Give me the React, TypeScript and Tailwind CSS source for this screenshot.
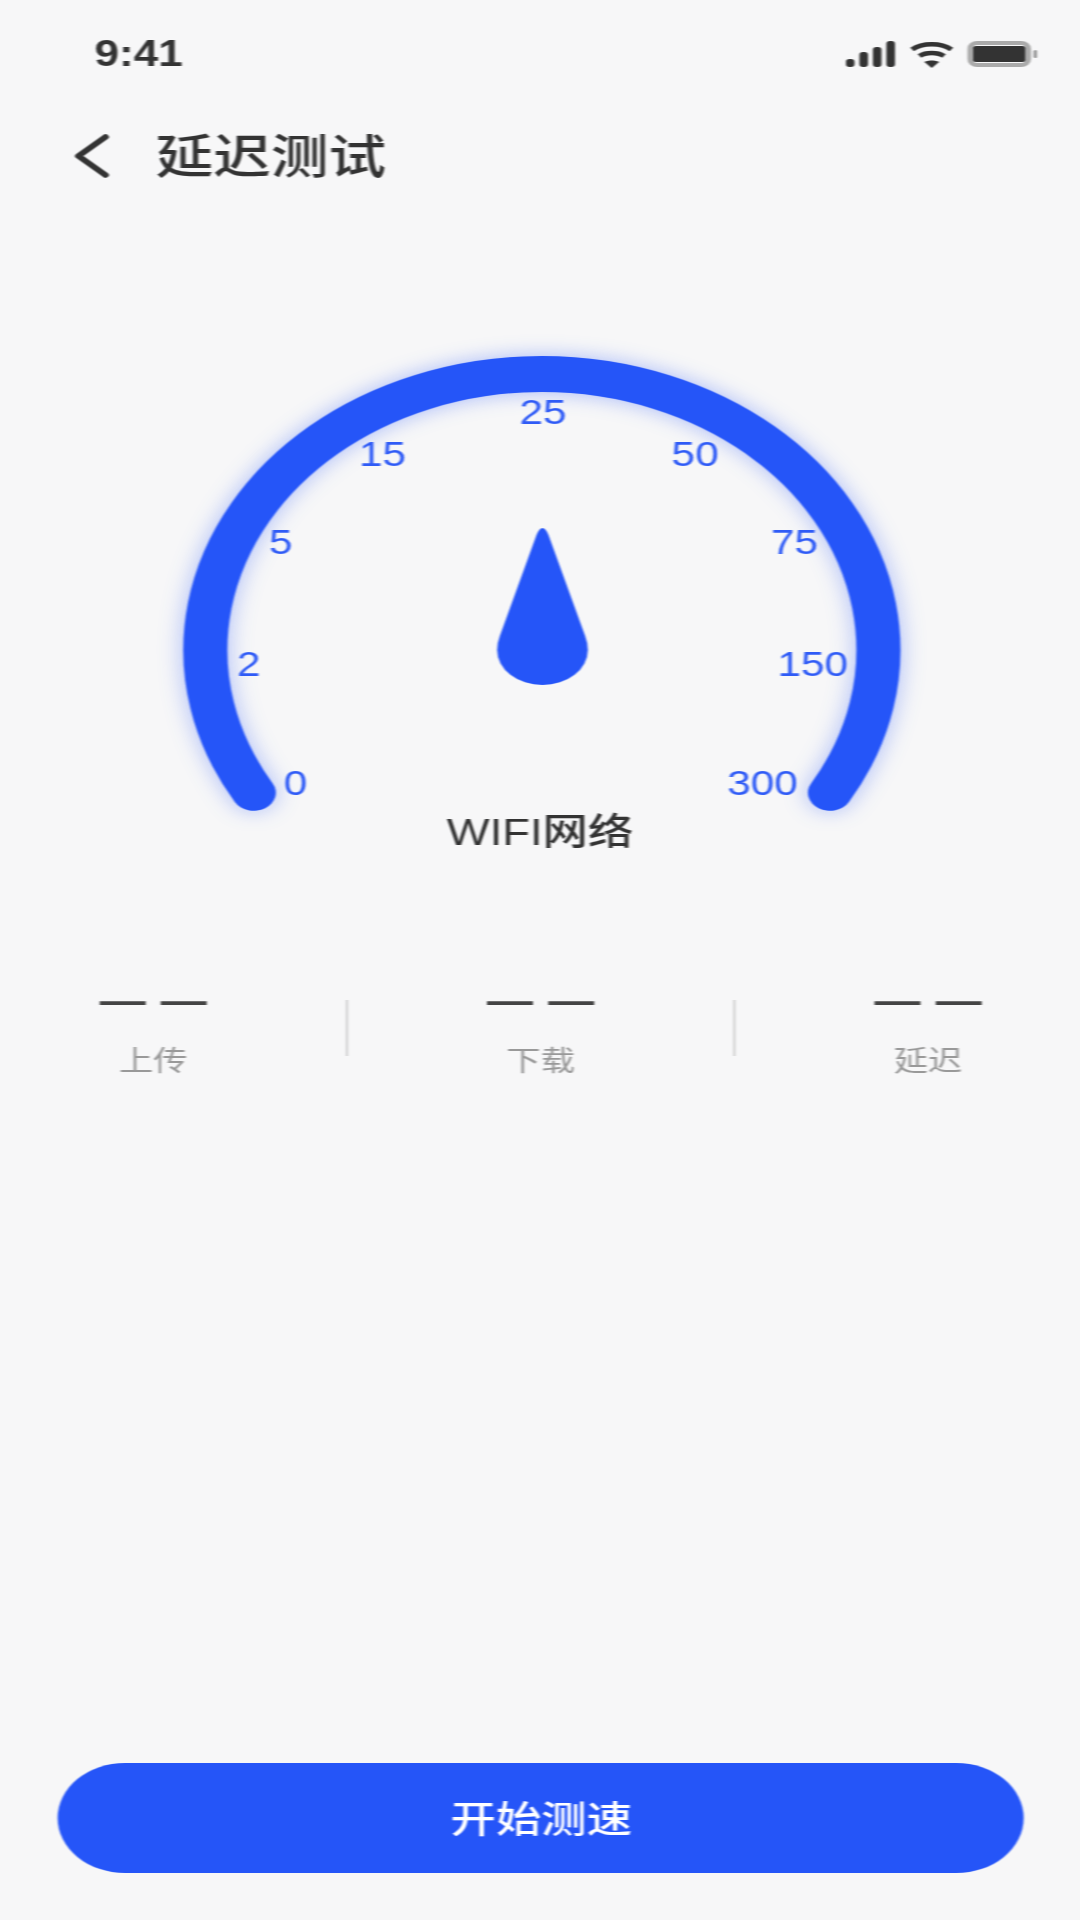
const gaugeLabels = [
  { text: '0', className: 'left-[241px] top-[443px]' },
  { text: '2', className: 'left-[203px] top-[324px]' },
  { text: '5', className: 'left-[229px] top-[202px]' },
  { text: '15', className: 'left-[312px] top-[114px]' },
  { text: '25', className: 'left-[443px] top-[72px]' },
  { text: '50', className: 'left-[567px] top-[114px]' },
  { text: '75', className: 'left-[648px] top-[202px]' },
  { text: '150', className: 'left-[663px] top-[324px]' },
  { text: '300', className: 'left-[622px] top-[443px]' },
];

const stats = ['上传', '下载', '延迟'];

function StatusIcons() {
  return (
    <div className="flex items-center gap-[11px]">
      <svg width="41" height="26" viewBox="0 0 41 26" fill="#333333">
        <rect x="0" y="18" width="7" height="8" rx="3" />
        <rect x="11" y="11" width="7" height="15" rx="3" />
        <rect x="22" y="6" width="7" height="20" rx="3" />
        <rect x="33" y="0" width="7" height="26" rx="3" />
      </svg>
      <svg width="36" height="27" viewBox="0 0 36 27" fill="none" stroke="#333333" strokeWidth="4.5">
        <path d="M2 8.5 C 10 1.5, 26 1.5, 34 8.5" />
        <path d="M8 15 C 13 11, 23 11, 28 15" />
        <path d="M18 27 L 12 21 C 15 19, 21 19, 24 21 Z" fill="#333333" stroke="none" />
      </svg>
      <svg width="57" height="26" viewBox="0 0 57 26">
        <rect x="2" y="2" width="48" height="22" rx="6" fill="#f7f7f8" stroke="#aaaaaa" strokeWidth="4" />
        <rect x="4.5" y="5" width="43" height="16" rx="2.5" fill="#333333" />
        <rect x="54" y="9" width="3" height="8" rx="1.5" fill="#999999" />
      </svg>
    </div>
  );
}

function Gauge() {
  return (
    <section className="mt-[136px] relative">
      <svg
        viewBox="0 0 881 470"
        className="block h-[470px] w-[881px] overflow-visible drop-shadow-[0_0_10px_rgba(37,84,250,0.38)]"
      >
        <path
          d="M 207 452.7 A 274.5 276 0 1 1 677 452.7"
          fill="none"
          stroke="#2555f8"
          strokeWidth="36"
          strokeLinecap="round"
        />
      </svg>
      <svg viewBox="0 0 881 470" className="absolute left-0 top-0 h-[470px] w-[881px]">
        <path
          d="M 437.6 195 Q 442.5 181 447.4 195 L 477.3 296 Q 479.5 303 479.5 310 A 37 35 0 0 1 405.5 310 Q 405.5 303 407.7 296 Z"
          fill="#2555f8"
        />
      </svg>
      {gaugeLabels.map((label) => (
        <span
          key={label.text}
          className={`absolute -translate-x-1/2 -translate-y-1/2 text-[34.5px] leading-none text-[#2f5bf6] ${label.className}`}
        >
          {label.text}
        </span>
      ))}
      <p className="h-[46px] text-center text-[37px] font-medium leading-[46px] text-[#333333]">WIFI网络</p>
    </section>
  );
}

export default function App() {
  return (
    <div className="h-[1920px] w-[1080px] overflow-hidden bg-[#f7f7f8]">
      <div className="flex h-[1920px] w-[881px] origin-top-left scale-x-[1.226] flex-col font-['Liberation_Sans','Noto_Sans_CJK_SC',sans-serif] blur-[0.7px]">
        <header className="flex h-[108px] items-center justify-between pl-[77px] pr-[35px]">
          <span className="text-[36px] font-bold leading-none text-[#333333]">9:41</span>
          <StatusIcons />
        </header>

        <div className="flex h-[96px] items-center gap-[38px] pl-[60px]">
          <svg width="29" height="44" viewBox="0 0 29 44" fill="none" stroke="#333333" strokeWidth="5.5">
            <path d="M26 3 L 4 22 L 26 41" strokeLinecap="round" strokeLinejoin="round" />
          </svg>
          <h1 className="text-[47px] font-medium leading-none text-[#333333]">延迟测试</h1>
        </div>

        <Gauge />

        <div className="mt-[144px] flex items-start justify-between pl-[80.5px] pr-[79.5px]">
          {stats.map((label, index) => (
            <div key={label} className="contents">
              {index > 0 && <div className="h-[56px] w-[1.5px] bg-[#d4d4d4]" />}
              <div className="flex w-[89px] flex-col items-center">
                <span className="-mt-[5px] h-[10px] whitespace-nowrap text-[37.5px] font-bold leading-[10px] text-[#444444] [word-spacing:2px]">
                  — —
                </span>
                <span className="mt-[37px] text-[28px] leading-[40px] text-[#999999]">{label}</span>
              </div>
            </div>
          ))}
        </div>

        <button
          type="button"
          className="mx-[46.5px] mb-[47px] mt-auto h-[110px] rounded-[55px] bg-[#2555f8] pl-[2px] pt-[6px] text-[37px] font-medium text-white"
        >
          开始测速
        </button>
      </div>
    </div>
  );
}
